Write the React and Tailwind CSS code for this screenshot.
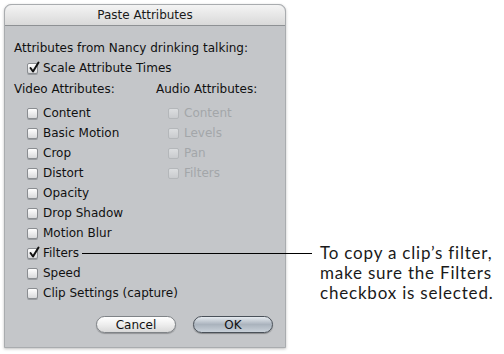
import React from 'react';

const videoItems = [
  { label: 'Content' },
  { label: 'Basic Motion' },
  { label: 'Crop' },
  { label: 'Distort' },
  { label: 'Opacity' },
  { label: 'Drop Shadow' },
  { label: 'Motion Blur' },
  { label: 'Filters', checked: true },
  { label: 'Speed' },
  { label: 'Clip Settings (capture)' },
];

const audioItems = ['Content', 'Levels', 'Pan', 'Filters'];

const Check = ({ checked, disabled }) => (
  <span
    className={`relative inline-block w-[11px] h-[11px] rounded-[2px] border shrink-0 ${
      disabled
        ? 'border-[#b4b7ba] bg-gradient-to-b from-[#dcdee0] to-[#c9cbce]'
        : 'border-[#8a8d91] bg-gradient-to-b from-[#ffffff] to-[#d9dadc] shadow-[0_1px_0_#9a9da1]'
    }`}
  >
    {checked && (
      <svg className="absolute left-[0px] top-[-3px]" width="13" height="13" viewBox="0 0 13 13">
        <path d="M2.5 7 L5 10.5 L10.5 1.5" fill="none" stroke="#111" strokeWidth="2" strokeLinecap="round" strokeLinejoin="round" />
      </svg>
    )}
  </span>
);

const Row = ({ label, checked, disabled }) => (
  <div className="flex items-center h-[20px] gap-[5px] whitespace-nowrap">
    <Check checked={checked} disabled={disabled} />
    <span className={disabled ? 'text-[#a3a6a9]' : 'text-[#111]'}>{label}</span>
  </div>
);

export default function App() {
  return (
    <div className="relative w-[504px] h-[354px] bg-white overflow-hidden flex">
      {/* Dialog */}
      <div
        className="ml-[4px] mt-[4px] w-[282px] h-[344px] shrink-0 rounded-t-[7px] bg-[#c4c6c9] border border-[#a9acaf] shadow-[0_1px_3px_rgba(0,0,0,0.25)] flex flex-col text-[12px]"
        style={{ fontFamily: '"DejaVu Sans", sans-serif' }}
      >
        <div className="h-[21px] rounded-t-[7px] bg-gradient-to-b from-[#f4f4f4] to-[#d9d9d9] border-b border-[#8e9194] flex items-center justify-center text-[#1a1a1a] text-[12px]">
          Paste Attributes
        </div>
        <div className="pl-[9px] pt-[12px] flex flex-col">
          <div className="h-[20px] flex items-center text-[#111] whitespace-nowrap">Attributes from Nancy drinking talking:</div>
          <div className="pl-[13px]">
            <Row label="Scale Attribute Times" checked />
          </div>
          <div className="flex mt-[1px]">
            <div className="w-[142px] flex flex-col">
              <div className="h-[20px] flex items-center text-[#111] whitespace-nowrap">Video Attributes:</div>
              <div className="pl-[13px] mt-[4px] flex flex-col">
                {videoItems.map((it) => (
                  <Row key={it.label} label={it.label} checked={it.checked} />
                ))}
              </div>
            </div>
            <div className="flex flex-col">
              <div className="h-[20px] flex items-center text-[#111] whitespace-nowrap">Audio Attributes:</div>
              <div className="pl-[12px] mt-[4px] flex flex-col">
                {audioItems.map((a) => (
                  <Row key={a} label={a} disabled />
                ))}
              </div>
            </div>
          </div>
          <div className="flex justify-end gap-[17px] mt-[13px] pr-[12px]">
            <button className="w-[80px] h-[17px] rounded-full border border-[#7f8387] bg-gradient-to-b from-[#ffffff] via-[#eeeeee] to-[#d9d9d9] text-[12px] text-[#111] flex items-center justify-center shadow-[0_1px_1px_rgba(0,0,0,0.25)]">
              Cancel
            </button>
            <button className="w-[80px] h-[17px] rounded-full border border-[#4a5159] bg-gradient-to-b from-[#e6ebf0] via-[#aab3bd] to-[#c9d1d9] text-[12px] text-[#111] flex items-center justify-center shadow-[0_1px_1px_rgba(0,0,0,0.3)]">
              OK
            </button>
          </div>
        </div>
      </div>

      {/* Callout */}
      <div
        className="ml-[34px] mt-[243px] text-[17px] leading-[20px] tracking-[0.8px] text-[#1a1a1a] whitespace-nowrap"
        style={{ fontFamily: 'Lato, sans-serif' }}
      >
        <div>To copy a clip’s filter,</div>
        <div>make sure the Filters</div>
        <div>checkbox is selected.</div>
      </div>
      <div className="absolute left-[82px] top-[253px] w-[230px] h-[1px] bg-black" />
    </div>
  );
}
